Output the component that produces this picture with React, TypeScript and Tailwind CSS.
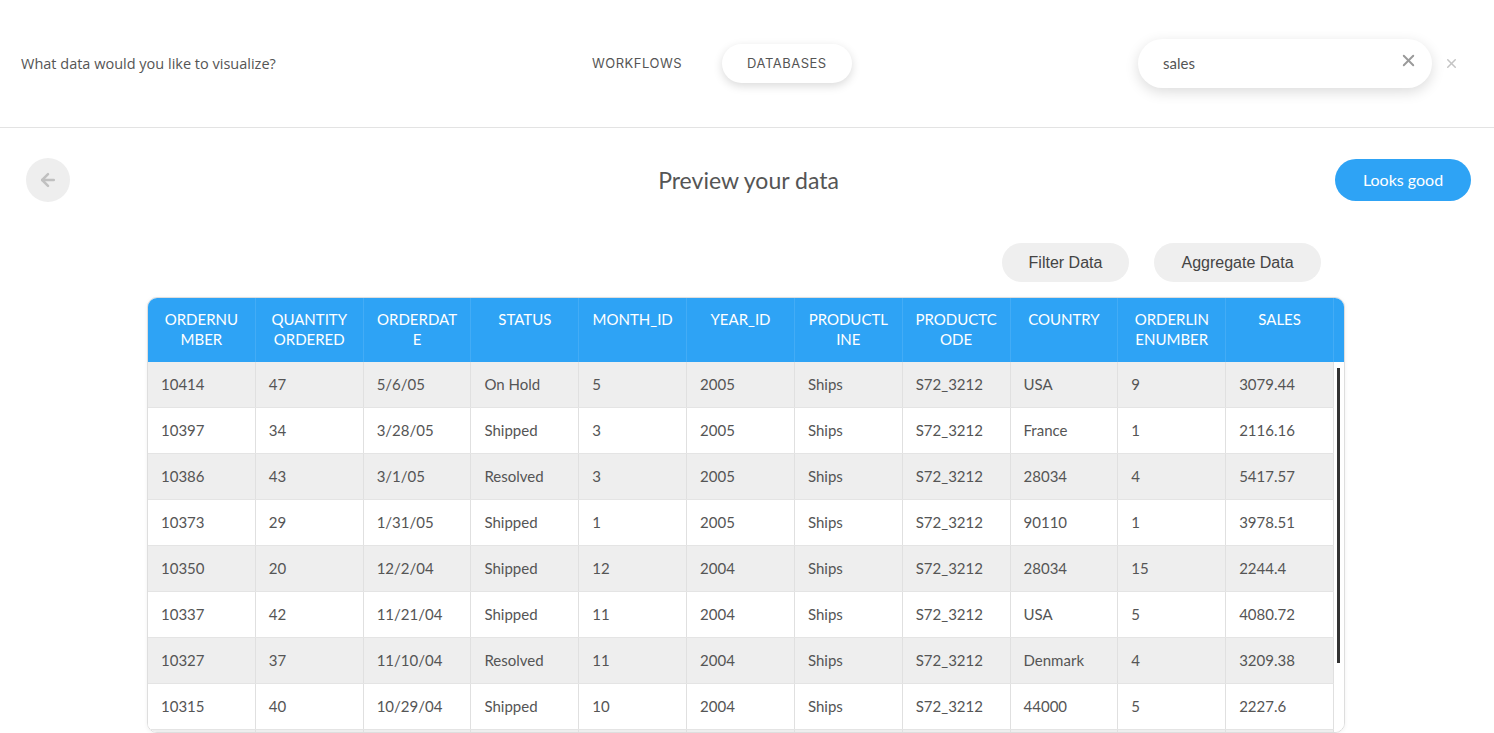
import { X, ArrowLeft } from "lucide-react";

type Row = string[];

// Column headers, split where the source breaks them
const headers: string[][] = [
  ["ORDERNU", "MBER"],
  ["QUANTITY", "ORDERED"],
  ["ORDERDAT", "E"],
  ["STATUS"],
  ["MONTH_ID"],
  ["YEAR_ID"],
  ["PRODUCTL", "INE"],
  ["PRODUCTC", "ODE"],
  ["COUNTRY"],
  ["ORDERLIN", "ENUMBER"],
  ["SALES"],
];

const rows: Row[] = [
  ["10414", "47", "5/6/05", "On Hold", "5", "2005", "Ships", "S72_3212", "USA", "9", "3079.44"],
  ["10397", "34", "3/28/05", "Shipped", "3", "2005", "Ships", "S72_3212", "France", "1", "2116.16"],
  ["10386", "43", "3/1/05", "Resolved", "3", "2005", "Ships", "S72_3212", "28034", "4", "5417.57"],
  ["10373", "29", "1/31/05", "Shipped", "1", "2005", "Ships", "S72_3212", "90110", "1", "3978.51"],
  ["10350", "20", "12/2/04", "Shipped", "12", "2004", "Ships", "S72_3212", "28034", "15", "2244.4"],
  ["10337", "42", "11/21/04", "Shipped", "11", "2004", "Ships", "S72_3212", "USA", "5", "4080.72"],
  ["10327", "37", "11/10/04", "Resolved", "11", "2004", "Ships", "S72_3212", "Denmark", "4", "3209.38"],
  ["10315", "40", "10/29/04", "Shipped", "10", "2004", "Ships", "S72_3212", "44000", "5", "2227.6"],
];

export default function App() {
  return (
    <div className="min-h-screen bg-white font-['Lato','Noto_Sans',sans-serif] text-[#555]">
      {/* Top bar */}
      <div className="flex h-[128px] items-center border-b border-[#e3e3e3] pl-[21px] pr-[35px]">
        <div className="w-[546px] font-['Open_Sans',sans-serif] text-[14.5px] text-[#555]">
          What data would you like to visualize?
        </div>
        <div className="flex items-center gap-[15px] font-['Inter',sans-serif] text-[13px] text-[#555]">
          <button className="h-[39px] rounded-full px-[25px] tracking-[0.5px]">WORKFLOWS</button>
          <button className="h-[39px] rounded-full bg-white px-[25px] tracking-[0.5px] shadow-[0_3px_10px_rgba(0,0,0,0.15)]">
            DATABASES
          </button>
        </div>
        <div className="ml-auto flex items-center gap-[12px]">
          <div className="flex h-[49px] w-[294px] items-center rounded-full bg-white pl-[25px] pr-[14px] shadow-[0_4px_14px_rgba(0,0,0,0.14)]">
            <span className="flex-1 text-[15px] text-[#555]">sales</span>
            <X className="mb-[7px] h-[19px] w-[19px] text-[#9a9a9a]" strokeWidth={2.4} />
          </div>
          <X className="h-[15px] w-[15px] text-[#c4c4c4]" strokeWidth={2.4} />
        </div>
      </div>

      {/* Title row */}
      <div className="mt-[30px] grid h-[44px] grid-cols-[1fr_auto_1fr] items-center pl-[26px] pr-[23px]">
        <div>
          <button className="flex h-[44px] w-[44px] items-center justify-center rounded-full bg-[#eeeeee]">
            <ArrowLeft className="h-[20px] w-[20px] text-[#c0c0c0]" strokeWidth={3} />
          </button>
        </div>
        <h1 className="text-[23px] text-[#555]">Preview your data</h1>
        <div className="flex justify-end">
          <button className="h-[42px] w-[136px] rounded-full bg-[#2ea3f5] text-[16px] text-white">
            Looks good
          </button>
        </div>
      </div>

      {/* Actions + table */}
      <div className="ml-[147px] mt-[41px] w-[1198px]">
        <div className="flex justify-end gap-[25px] pr-[24px] font-['Liberation_Sans',Arial,sans-serif] text-[16px] text-[#444]">
          <button className="h-[39px] w-[127px] rounded-full bg-[#efefef]">Filter Data</button>
          <button className="h-[39px] w-[167px] rounded-full bg-[#efefef]">Aggregate Data</button>
        </div>

        <div className="mt-[15px] overflow-hidden rounded-[10px] border border-[#dedede] shadow-[0_1px_4px_rgba(0,0,0,0.06)]">
          <div className="flex h-[64px] bg-[#2ea3f5]">
            <div className="grid w-[1186px] grid-cols-11">
              {headers.map((h, i) => (
                <div
                  key={i}
                  className="border-r border-white/10 pt-[11px] text-center text-[15px] leading-[20px] text-white"
                >
                  {h.map((line, j) => (
                    <div key={j}>{line}</div>
                  ))}
                </div>
              ))}
            </div>
          </div>

          <div className="relative flex h-[370px] overflow-hidden bg-white">
            <div className="w-[1186px] shrink-0">
              {rows.map((row, i) => (
                <div
                  key={i}
                  className={`grid h-[46px] grid-cols-11 border-b border-[#e4e4e4] ${
                    i % 2 === 0 ? "bg-[#eeeeee]" : "bg-white"
                  }`}
                >
                  {row.map((cell, j) => (
                    <div
                      key={j}
                      className="flex items-center border-r border-[#e0e0e0] pl-[13px] text-[15px] text-[#555]"
                    >
                      {cell}
                    </div>
                  ))}
                </div>
              ))}
              <div className="grid h-[10px] grid-cols-11 bg-[#eeeeee]">
                {headers.map((_, j) => (
                  <div key={j} className="border-r border-[#e0e0e0]" />
                ))}
              </div>
            </div>
            {/* scrollbar */}
            <div className="flex-1 pl-[3px] pt-[6px]">
              <div className="h-[295px] w-[3px] bg-[#333]" />
            </div>
          </div>
        </div>
      </div>
    </div>
  );
}
